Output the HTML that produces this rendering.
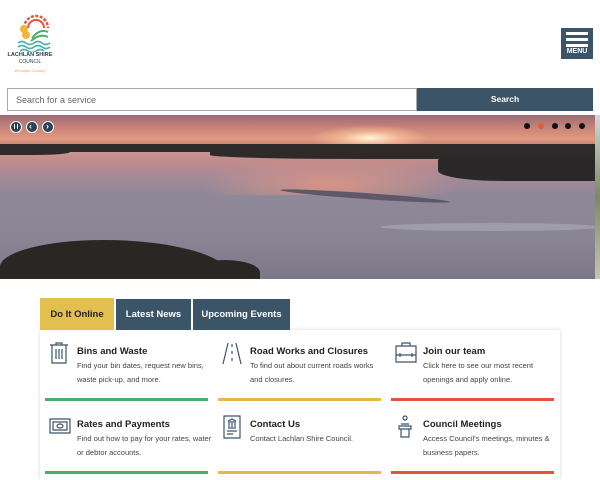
<!DOCTYPE html>
<html><head><style>
*{margin:0;padding:0;box-sizing:border-box}
body{width:600px;height:480px;overflow:hidden;background:#fff;font-family:"Liberation Sans",sans-serif;position:relative}
.abs{position:absolute}
.hero{left:0;top:115px;width:600px;height:164px;overflow:hidden;background:#8a8293}
.tab{position:absolute;top:299px;height:31px;color:#fff;font-size:9.5px;font-weight:bold;display:flex;align-items:center;justify-content:center}
.card{position:absolute;left:40px;top:330px;width:520px;height:150px;background:#fff;box-shadow:0 0 4px rgba(0,0,0,.15)}
.item{position:absolute;width:163px}
.item h4{position:absolute;left:32px;top:0;font-size:9.5px;color:#222;white-space:nowrap}
.item p{position:absolute;left:32px;top:13px;font-size:7.5px;line-height:14px;color:#444;width:135px}
.item .bar{position:absolute;left:0;width:163px;height:3px}
.item svg{position:absolute;left:4px;top:-4px}
</style></head><body>
<svg class="abs" style="left:14px;top:12px" width="38" height="40" viewBox="0 0 38 40">
<path d="M10 16a12 12 0 0 1 24 0" stroke="#e2553a" stroke-width="2.5" fill="none" stroke-dasharray="3 1.5"/>
<path d="M14 16a8 8 0 0 1 16 0" stroke="#e2553a" stroke-width="2" fill="none"/>
<circle cx="10" cy="17" r="4" fill="#f0b63a"/><circle cx="12" cy="23" r="4" fill="#f0b63a"/>
<path d="M18 26q8-10 16-6" stroke="#4bae62" stroke-width="2" fill="none"/>
<path d="M17 29q9-8 17-4" stroke="#4bae62" stroke-width="2" fill="none"/>
<path d="M4 31q4-3 8 0t8 0 8 0 8 0M4 35q4-3 8 0t8 0 8 0 8 0M6 39q4-3 8 0t8 0 8 0" stroke="#4ab0a8" stroke-width="1.6" fill="none"/>
</svg>
<div class="abs" style="left:0;top:52px;font-size:5.5px;font-weight:bold;color:#2b4256;width:60px;text-align:center;white-space:nowrap">LACHLAN SHIRE</div>
<div class="abs" style="left:0;top:59px;font-size:5px;color:#2b4256;width:60px;text-align:center">COUNCIL</div>
<div class="abs" style="left:0;top:68px;font-size:4px;color:#e0b040;width:60px;text-align:center;white-space:nowrap">Wiradjuri Country</div>
<div class="abs" style="left:561px;top:28px;width:32px;height:31px;background:#3b5468">
<div class="abs" style="left:5px;top:4px;width:22px;height:3px;background:#fff"></div>
<div class="abs" style="left:5px;top:10px;width:22px;height:3px;background:#fff"></div>
<div class="abs" style="left:5px;top:16px;width:22px;height:3px;background:#fff"></div>
<div class="abs" style="left:0;top:20px;width:32px;text-align:center;color:#fff;font-size:7px;font-weight:bold">MENU</div></div>
<div class="abs" style="left:7px;top:88px;width:410px;height:23px;border:1px solid #aaa;font-size:9px;color:#666;padding:6px 8px">Search for a service</div>
<div class="abs" style="left:417px;top:88px;width:176px;height:23px;background:#3b5468;color:#fff;font-size:8.5px;font-weight:bold;text-align:center;line-height:23px">Search</div>
<div class="abs hero">
<div class="abs" style="left:0;top:0;width:600px;height:32px;background:linear-gradient(180deg,#9c6a78 0%,#c98478 40%,#e09a80 75%,#b87a78 100%)"></div>
<div class="abs" style="left:310px;top:10px;width:120px;height:26px;background:radial-gradient(ellipse,#fff4d8 0%,rgba(255,200,160,.6) 35%,rgba(0,0,0,0) 70%)"></div>
<div class="abs" style="left:0;top:30px;width:600px;height:50px;background:linear-gradient(180deg,#caa0a0 0%,#c28c8a 30%,#a88a98 60%,#8e8898 100%)"></div>
<div class="abs" style="left:200px;top:40px;width:260px;height:60px;background:radial-gradient(ellipse,rgba(230,150,130,.8),rgba(0,0,0,0) 70%)"></div>
<div class="abs" style="left:0;top:80px;width:600px;height:84px;background:linear-gradient(180deg,#8e8898,#8a8595 50%,#7c7888)"></div>
<div class="abs" style="left:0;top:29px;width:600px;height:8px;background:#2e2a2a"></div>
<div class="abs" style="left:0;top:34px;width:70px;height:6px;background:#2e2a2a;border-radius:0 0 50% 0"></div>
<div class="abs" style="left:210px;top:34px;width:390px;height:10px;background:#2e2a2a;border-radius:0 0 0 40%"></div>
<div class="abs" style="left:438px;top:40px;width:162px;height:26px;background:#2a2828;border-radius:20% 0 0 40%"></div>
<div class="abs" style="left:280px;top:78px;width:170px;height:6px;background:#5e5868;border-radius:50%;transform:rotate(4deg)"></div>
<div class="abs" style="left:380px;top:108px;width:220px;height:8px;background:#a8a6b4;border-radius:50%;opacity:.7"></div>
<div class="abs" style="left:0;top:125px;width:230px;height:45px;background:#2a2624;border-radius:45% 55% 0 0/60% 80% 0 0"></div>
<div class="abs" style="left:190px;top:145px;width:70px;height:25px;background:#2a2624;border-radius:50% 50% 0 0"></div>
<div class="abs" style="left:595px;top:0;width:5px;height:164px;background:linear-gradient(180deg,#d0d8dc,#7a8a60 50%,#c8c4b8)"></div>
</div>
<div class="abs" style="left:10px;top:121px;width:12px;height:12px;border-radius:50%;background:#2b4256;border:1px solid #fff"></div>
<div class="abs" style="left:26px;top:121px;width:12px;height:12px;border-radius:50%;background:#2b4256;border:1px solid #fff"></div>
<div class="abs" style="left:42px;top:121px;width:12px;height:12px;border-radius:50%;background:#2b4256;border:1px solid #fff"></div>
<div class="abs" style="left:13.5px;top:124px;width:1.5px;height:5px;background:#fff"></div>
<div class="abs" style="left:16.5px;top:124px;width:1.5px;height:5px;background:#fff"></div>
<div class="abs" style="left:29px;top:121px;font-size:9px;color:#fff;font-weight:bold">‹</div>
<div class="abs" style="left:46px;top:121px;font-size:9px;color:#fff;font-weight:bold">›</div>
<div class="abs" style="left:524px;top:123px;width:6px;height:6px;border-radius:50%;background:#111"></div>
<div class="abs" style="left:538px;top:123px;width:6px;height:6px;border-radius:50%;background:#d9643a"></div>
<div class="abs" style="left:552px;top:123px;width:6px;height:6px;border-radius:50%;background:#111"></div>
<div class="abs" style="left:565px;top:123px;width:6px;height:6px;border-radius:50%;background:#111"></div>
<div class="abs" style="left:579px;top:123px;width:6px;height:6px;border-radius:50%;background:#111"></div>
<div class="card"></div>
<div class="tab" style="left:40px;width:74px;background:#e2c050;color:#222;top:298px;height:32px">Do It Online</div>
<div class="tab" style="left:116px;width:75px;background:#3b5468">Latest News</div>
<div class="tab" style="left:193px;width:97px;background:#3b5468">Upcoming Events</div>

<div class="item" style="left:45px;top:346px"><svg width="20" height="24" viewBox="0 0 20 24" fill="none" stroke="#3b5468" stroke-width="1.2"><path d="M1 3h18M7 3V1h6v2M3 3v18h14V3M7 7v10M10 7v10M13 7v10"/></svg><h4>Bins and Waste</h4><p>Find your bin dates, request new bins, waste pick-up, and more.</p><div class="bar" style="top:52px;background:#4bae6e"></div></div>
<div class="item" style="left:218px;top:346px"><svg width="20" height="24" viewBox="0 0 20 24" fill="none" stroke="#3b5468" stroke-width="1.2"><path d="M6 1L1 22M14 1l5 21M10 2v3M10 9v3M10 16v3"/></svg><h4>Road Works and Closures</h4><p>To find out about current roads works and closures.</p><div class="bar" style="top:52px;background:#e6b84a"></div></div>
<div class="item" style="left:391px;top:346px"><svg width="22" height="24" viewBox="0 0 22 24" fill="none" stroke="#3b5468" stroke-width="1.2"><path d="M7 4V1h8v3M1 4h20v16H1zM1 13h20M5 11v4M17 11v4"/></svg><h4>Join our team</h4><p>Click here to see our most recent openings and apply online.</p><div class="bar" style="top:52px;background:#e0553c"></div></div>

<div class="item" style="left:45px;top:419px"><svg width="22" height="24" viewBox="0 0 22 24" fill="none" stroke="#3b5468" stroke-width="1.2"><path d="M1 4h20v14H1zM4 7h14v8H4z"/><ellipse cx="11" cy="11" rx="3" ry="2"/></svg><h4>Rates and Payments</h4><p>Find out how to pay for your rates, water or debtor accounts.</p><div class="bar" style="top:52px;background:#4bae6e"></div></div>
<div class="item" style="left:218px;top:419px"><svg width="20" height="24" viewBox="0 0 20 24" fill="none" stroke="#3b5468" stroke-width="1.2"><path d="M2 1h16v22H2zM6 6l4-2 4 2M6 7h8M7 8v4M10 8v4M13 8v4M6 13h8M5 16h10M5 19h6"/></svg><h4>Contact Us</h4><p>Contact Lachlan Shire Council.</p><div class="bar" style="top:52px;background:#e6b84a"></div></div>
<div class="item" style="left:391px;top:419px"><svg width="20" height="24" viewBox="0 0 20 24" fill="none" stroke="#3b5468" stroke-width="1.2"><circle cx="10" cy="3" r="2"/><path d="M6 9h8M4 11h12v3H4zM6 14v8h8v-8"/></svg><h4>Council Meetings</h4><p>Access Council's meetings, minutes &amp; business papers.</p><div class="bar" style="top:52px;background:#e0553c"></div></div>
</body></html>
